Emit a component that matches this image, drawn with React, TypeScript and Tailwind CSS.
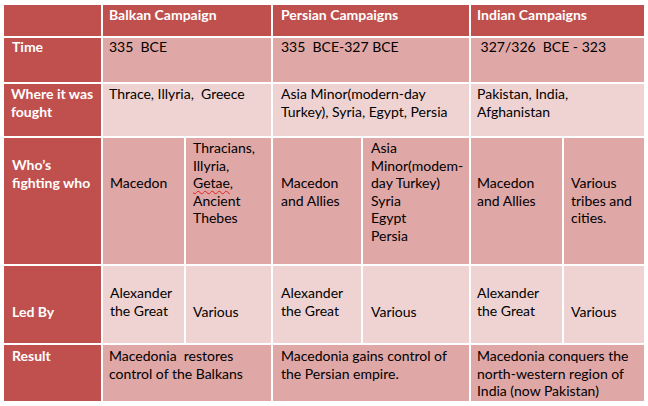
const head = 'bg-[#c0504d] text-white font-bold'
const mid = 'bg-[#dfa7a6] text-black'
const light = 'bg-[#efd3d2] text-black'

function Cell({ className, children }: { className: string; children?: React.ReactNode }) {
  return <div className={`whitespace-pre ${className}`}>{children}</div>
}

export default function App() {
  return (
    <div className="min-h-screen bg-white pl-[4px] pt-[5px]" style={{ fontFamily: 'Lato, "Open Sans", sans-serif' }}>
      <div className="grid grid-cols-[97px_81px_85px_88px_106px_91px_80px] grid-rows-[31px_44px_52px_126px_77px_56px] gap-[2px] text-[14px] leading-[17.6px]">
        {/* header */}
        <Cell className={head} />
        <Cell className={`${head} col-span-2 pl-[6px] pt-[1px]`}>Balkan Campaign</Cell>
        <Cell className={`${head} col-span-2 pl-[8px] pt-[1px]`}>Persian Campaigns</Cell>
        <Cell className={`${head} col-span-2 pl-[6px] pt-[1px]`}>Indian Campaigns</Cell>

        {/* time */}
        <Cell className={`${head} pl-[8px]`}>Time</Cell>
        <Cell className={`${mid} col-span-2 pl-[6px]`}>335  BCE</Cell>
        <Cell className={`${mid} col-span-2 pl-[8px]`}>335  BCE-327 BCE</Cell>
        <Cell className={`${mid} col-span-2 pl-[6px]`}> 327/326  BCE - 323</Cell>

        {/* where */}
        <Cell className={`${head} pl-[7px] pt-[1px]`}>Where it was{'\n'}fought</Cell>
        <Cell className={`${light} col-span-2 pl-[6px] pt-[1px]`}>Thrace, Illyria,  Greece</Cell>
        <Cell className={`${light} col-span-2 pl-[8px] pt-[1px]`}>Asia Minor(modern-day{'\n'}Turkey), Syria, Egypt, Persia</Cell>
        <Cell className={`${light} col-span-2 pl-[6px] pt-[1px]`}>Pakistan, India,{'\n'}Afghanistan</Cell>

        {/* who */}
        <Cell className={`${head} pl-[8px] pt-[18px]`}>Who’s{'\n'}fighting who</Cell>
        <Cell className={`${mid} pl-[7px] pt-[36px]`}>Macedon</Cell>
        <Cell className={`${mid} pl-[7px] pt-[1px]`}>
          Thracians,{'\n'}Illyria,{'\n'}
          <span className="underline decoration-wavy decoration-[#e02020] decoration-1 underline-offset-2">Getae</span>,{'\n'}Ancient{'\n'}Thebes
        </Cell>
        <Cell className={`${mid} pl-[8px] pt-[36px]`}>Macedon{'\n'}and Allies</Cell>
        <Cell className={`${mid} pl-[8px] pt-[1px]`}>Asia{'\n'}Minor(modem-{'\n'}day Turkey){'\n'}Syria{'\n'}Egypt{'\n'}Persia</Cell>
        <Cell className={`${mid} pl-[6px] pt-[36px]`}>Macedon{'\n'}and Allies</Cell>
        <Cell className={`${mid} pl-[7px] pt-[36px]`}>Various{'\n'}tribes and{'\n'}cities.</Cell>

        {/* led by */}
        <Cell className={`${head} pl-[8px] pt-[37px]`}>Led By</Cell>
        <Cell className={`${light} pl-[7px] pt-[18px]`}>Alexander{'\n'}the Great</Cell>
        <Cell className={`${light} pl-[7px] pt-[37px]`}>Various</Cell>
        <Cell className={`${light} pl-[8px] pt-[18px]`}>Alexander{'\n'}the Great</Cell>
        <Cell className={`${light} pl-[8px] pt-[37px]`}>Various</Cell>
        <Cell className={`${light} pl-[6px] pt-[18px]`}>Alexander{'\n'}the Great</Cell>
        <Cell className={`${light} pl-[7px] pt-[37px]`}>Various</Cell>

        {/* result */}
        <Cell className={`${head} pl-[8px] pt-[2px]`}>Result</Cell>
        <Cell className={`${mid} col-span-2 pl-[6px] pt-[2px]`}>Macedonia  restores{'\n'}control of the Balkans</Cell>
        <Cell className={`${mid} col-span-2 pl-[8px] pt-[2px]`}>Macedonia gains control of{'\n'}the Persian empire.</Cell>
        <Cell className={`${mid} col-span-2 pl-[6px] pt-[2px]`}>Macedonia conquers the{'\n'}north-western region of{'\n'}India (now Pakistan)</Cell>
      </div>
    </div>
  )
}
